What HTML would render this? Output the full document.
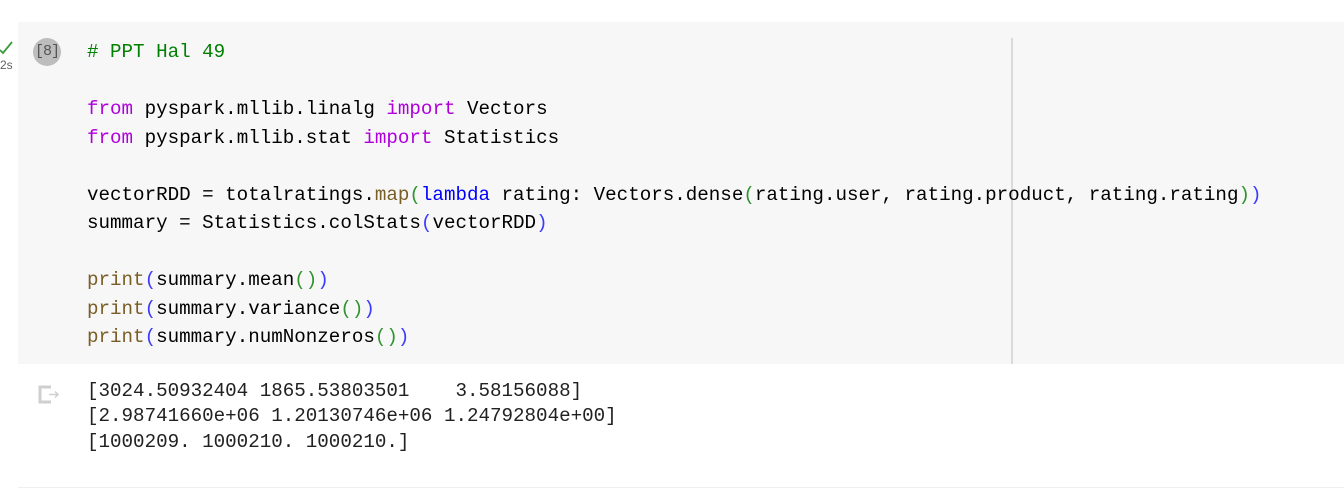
<!DOCTYPE html>
<html><head><meta charset="utf-8"><style>
html,body{margin:0;padding:0;background:#fff;width:1344px;height:489px;overflow:hidden;position:relative;font-family:"Liberation Mono",monospace}
.cell{position:absolute;left:18px;top:22px;width:1326px;height:342px;background:#f7f7f7}
.vl{position:absolute;left:1011px;top:38px;width:2px;height:326px;background:#dadada}
.ln{position:absolute;left:87px;font-size:19.2px;line-height:20px;white-space:pre;color:#000}
.k{color:#af00db}.c{color:#008000}.b{color:#0000ff}.f{color:#795e26}.p1{color:#319331}.p2{color:#3b3bff}
.out{position:absolute;left:87px;font-size:19.2px;line-height:20px;white-space:pre;color:#212121}
.num{position:absolute;left:33px;top:38px;width:28px;height:28px;border-radius:50%;background:#bdbdbd;color:#555;font-size:15px;text-align:center;line-height:28px;font-family:"Liberation Mono",monospace;letter-spacing:-1px;white-space:nowrap}
.bot{position:absolute;left:18px;top:487px;width:1326px;height:1px;background:#eee}
</style></head><body>
<div class="cell"></div>
<div class="vl"></div>
<svg style="position:absolute;left:0;top:39px" width="14" height="16"><path d="M0 11 L3 14 L12 3" stroke="#3c9a3c" stroke-width="1.8" fill="none"/></svg>
<div style="position:absolute;left:0;top:58px;font-family:'Liberation Sans',sans-serif;font-size:12px;color:#616161">2s</div>
<div class="num">[8]</div>
<div class="ln c" style="top:42px"># PPT Hal 49</div>
<div class="ln" style="top:99px"><span class="k">from</span> pyspark.mllib.linalg <span class="k">import</span> Vectors</div>
<div class="ln" style="top:128px"><span class="k">from</span> pyspark.mllib.stat <span class="k">import</span> Statistics</div>
<div class="ln" style="top:185px">vectorRDD = totalratings.<span class="f">map</span><span class="p1">(</span><span class="b">lambda</span> rating: Vectors.dense<span class="p1">(</span>rating.user, rating.product, rating.rating<span class="p1">)</span><span class="p2">)</span></div>
<div class="ln" style="top:213px">summary = Statistics.colStats<span class="p2">(</span>vectorRDD<span class="p2">)</span></div>
<div class="ln" style="top:270px"><span class="f">print</span><span class="p2">(</span>summary.mean<span class="p1">()</span><span class="p2">)</span></div>
<div class="ln" style="top:299px"><span class="f">print</span><span class="p2">(</span>summary.variance<span class="p1">()</span><span class="p2">)</span></div>
<div class="ln" style="top:327px"><span class="f">print</span><span class="p2">(</span>summary.numNonzeros<span class="p1">()</span><span class="p2">)</span></div>
<svg style="position:absolute;left:38px;top:385px" width="24" height="20"><path d="M13 2 H2 V17 H13" stroke="#cfcfcf" stroke-width="3" fill="none"/><path d="M11 9.5 H20 M17 6.5 L20 9.5 L17 12.5" stroke="#cfcfcf" stroke-width="1.5" fill="none"/></svg>
<div class="out" style="top:381px">[3024.50932404 1865.53803501    3.58156088]</div>
<div class="out" style="top:406px">[2.98741660e+06 1.20130746e+06 1.24792804e+00]</div>
<div class="out" style="top:432px">[1000209. 1000210. 1000210.]</div>
<div class="bot"></div>
</body></html>
